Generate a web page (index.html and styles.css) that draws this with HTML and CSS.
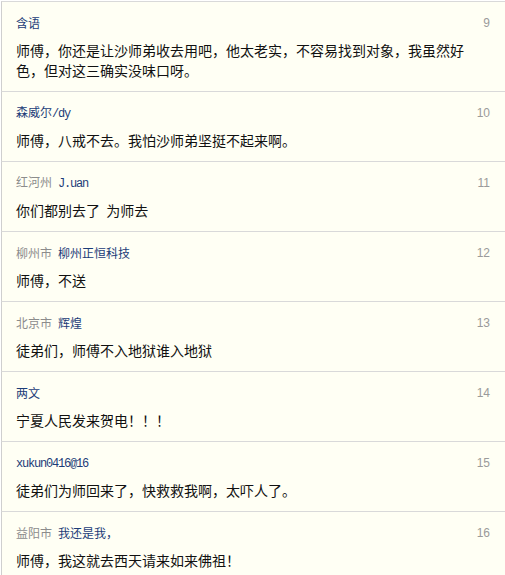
FILE: index.html
```html
<!DOCTYPE html>
<html lang="zh-CN">
<head>
<meta charset="utf-8">
<title>评论</title>
<link rel="stylesheet" href="styles.css">
</head>
<body>
<ul class="comments">
  <li class="comment">
    <div class="meta"><span class="who"><span class="name">含语</span></span><span class="floor">9</span></div>
    <p class="text">师傅，你还是让沙师弟收去用吧，他太老实，不容易找到对象，我虽然好色，但对这三确实没味口呀。</p>
  </li>
  <li class="comment">
    <div class="meta"><span class="who"><span class="name">森威尔<span class="latin">/dy</span></span></span><span class="floor">10</span></div>
    <p class="text">师傅，八戒不去。我怕沙师弟坚挺不起来啊。</p>
  </li>
  <li class="comment">
    <div class="meta"><span class="who"><span class="loc">红河州</span><span class="name"><span class="latin">J.uan</span></span></span><span class="floor">11</span></div>
    <p class="text">你们都别去了&nbsp;&nbsp;为师去</p>
  </li>
  <li class="comment">
    <div class="meta"><span class="who"><span class="loc">柳州市</span><span class="name">柳州正恒科技</span></span><span class="floor">12</span></div>
    <p class="text">师傅，不送</p>
  </li>
  <li class="comment">
    <div class="meta"><span class="who"><span class="loc">北京市</span><span class="name">辉煌</span></span><span class="floor">13</span></div>
    <p class="text">徒弟们，师傅不入地狱谁入地狱</p>
  </li>
  <li class="comment">
    <div class="meta"><span class="who"><span class="name">两文</span></span><span class="floor">14</span></div>
    <p class="text">宁夏人民发来贺电！！！</p>
  </li>
  <li class="comment">
    <div class="meta"><span class="who"><span class="name"><span class="latin">xukun0416@16</span></span></span><span class="floor">15</span></div>
    <p class="text">徒弟们为师回来了，快救救我啊，太吓人了。</p>
  </li>
  <li class="comment">
    <div class="meta"><span class="who"><span class="loc">益阳市</span><span class="name">我还是我，</span></span><span class="floor">16</span></div>
    <p class="text">师傅，我这就去西天请来如来佛祖！</p>
  </li>
</ul>
</body>
</html>
```

FILE: styles.css
```css
html, body {
  margin: 0;
  padding: 0;
  background: #ffffff;
}

body {
  font-family: "Noto Sans CJK SC", "Liberation Sans", sans-serif;
  color: #111111;
}

.comments {
  list-style: none;
  margin: 0;
  padding: 1px 0 0 1px;
}

.comment {
  background: #fffff4;
  border-top: 1px solid #d9d9d9;
  border-left: 1px solid #cfcfcf;
  padding: 11px 15px 11px 14px;
}

.meta {
  display: flex;
  justify-content: space-between;
  align-items: center;
  height: 20px;
  font-size: 12px;
  line-height: 20px;
}

.loc {
  color: #8c8c8c;
  margin-right: 6px;
}

.name {
  color: #1c3c78;
}

.latin {
  font-family: "Liberation Mono", monospace;
  letter-spacing: -1.2px;
}

.floor {
  color: #9a9a9a;
  font-family: "Liberation Sans", sans-serif;
}

.text {
  margin: 7px 0 0 0;
  font-size: 14px;
  line-height: 20px;
  max-width: 455px;
  color: #111111;
}
```
